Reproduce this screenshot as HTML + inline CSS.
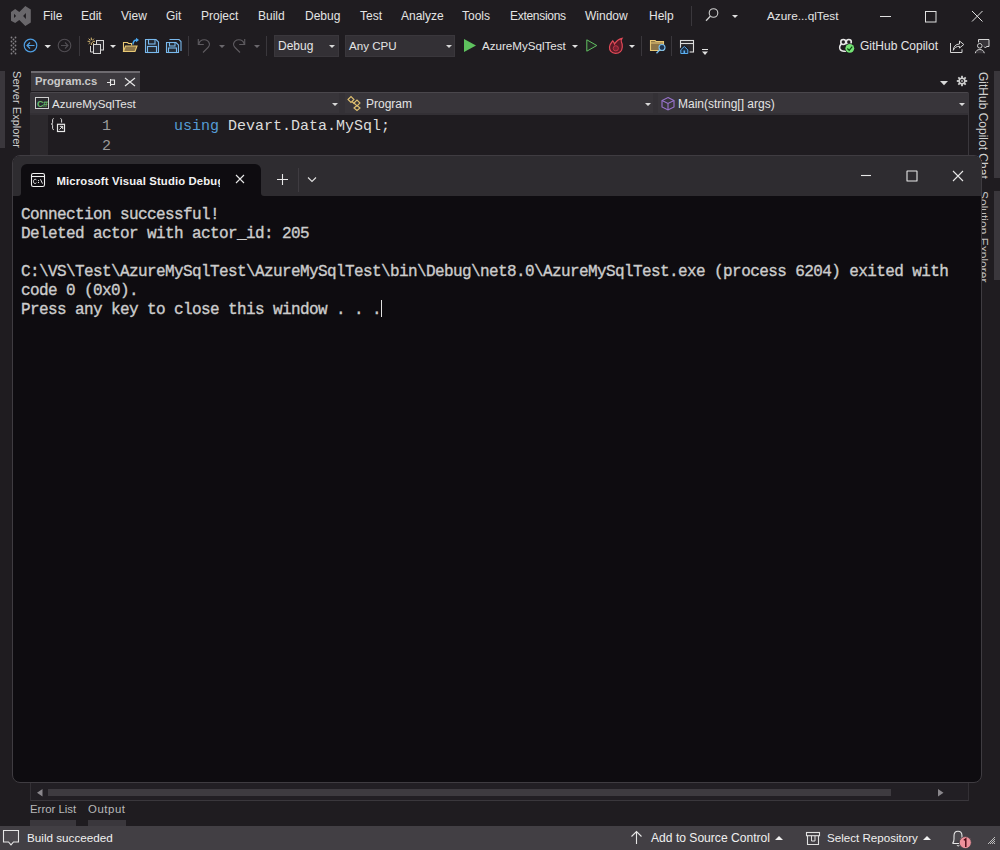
<!DOCTYPE html>
<html><head><meta charset="utf-8">
<style>
*{margin:0;padding:0;box-sizing:border-box}
html,body{width:1000px;height:850px;overflow:hidden;background:#1f1c20;font-family:"Liberation Sans",sans-serif;font-size:12px;color:#dcdcdc}
.a{position:absolute;white-space:nowrap}
svg{position:absolute;overflow:visible}
.menu{top:9px;color:#e4e4e4;font-size:12px}
.sep{position:absolute;width:1px;background:#3e3b40}
.combo{position:absolute;background:#333035;border:1px solid #3a373c}
.arr{position:absolute;width:0;height:0;border-left:3px solid transparent;border-right:3px solid transparent;border-top:3px solid #d0d0d0}
.mono{font-family:"Liberation Mono",monospace}
</style></head><body>

<!-- ===== Title / menu bar ===== -->
<svg style="left:0;top:0" width="40" height="30"><path d="M11 12 L15.2 9 L19.3 12 L25.3 5.9 L30.8 9.6 L30.8 22.4 L25.3 26 L19.3 20.1 L15.2 22.9 L11 20.7 Z M14 13.7 L16.1 16 L14 18 Z M25.9 13.1 L25.9 18.9 L23.1 16 Z" fill="#69676b" fill-rule="evenodd"/></svg>
<div class="a menu" style="left:43px">File</div>
<div class="a menu" style="left:81px">Edit</div>
<div class="a menu" style="left:121px">View</div>
<div class="a menu" style="left:166px">Git</div>
<div class="a menu" style="left:201px">Project</div>
<div class="a menu" style="left:258px">Build</div>
<div class="a menu" style="left:305px">Debug</div>
<div class="a menu" style="left:360px">Test</div>
<div class="a menu" style="left:401px">Analyze</div>
<div class="a menu" style="left:462px">Tools</div>
<div class="a menu" style="left:510px;letter-spacing:-0.3px">Extensions</div>
<div class="a menu" style="left:585px">Window</div>
<div class="a menu" style="left:649px">Help</div>


<!-- ===== Toolbar ===== -->
<svg style="left:0;top:0" width="1000" height="62">
 <g fill="#858287">
  <circle cx="11.5" cy="37.5" r="0.9"/><circle cx="15.5" cy="37.5" r="0.9"/>
  <circle cx="13.5" cy="39.5" r="0.9"/>
  <circle cx="11.5" cy="41.5" r="0.9"/><circle cx="15.5" cy="41.5" r="0.9"/>
  <circle cx="13.5" cy="43.5" r="0.9"/>
  <circle cx="11.5" cy="45.5" r="0.9"/><circle cx="15.5" cy="45.5" r="0.9"/>
  <circle cx="13.5" cy="47.5" r="0.9"/>
  <circle cx="11.5" cy="49.5" r="0.9"/><circle cx="15.5" cy="49.5" r="0.9"/>
  <circle cx="13.5" cy="51.5" r="0.9"/>
  <circle cx="11.5" cy="53.5" r="0.9"/><circle cx="15.5" cy="53.5" r="0.9"/>
 </g>
 <!-- back -->
 <circle cx="30.5" cy="45.5" r="6.3" fill="none" stroke="#4f9fe3" stroke-width="1.2"/>
 <path d="M27 45.5 H34.5 M30 42.5 L27 45.5 L30 48.5" fill="none" stroke="#4f9fe3" stroke-width="1.2"/>
 <path d="M44.5 45 H51 L47.75 48.2 Z" fill="#e0e0e0"/>
 <!-- forward -->
 <circle cx="64.5" cy="45.5" r="6.3" fill="none" stroke="#504d52" stroke-width="1.1"/>
 <path d="M61 45.5 H68 M65 42.5 L68 45.5 L65 48.5" fill="none" stroke="#504d52" stroke-width="1.1"/>
 <rect x="79" y="36" width="1" height="20" fill="#3a373c"/>
 <!-- new project -->
 <g fill="#2e2c31" stroke="#d4d4d4" stroke-width="1">
  <rect x="96.5" y="40.5" width="7" height="9.5"/>
  <rect x="93.5" y="44.5" width="7" height="9"/>
 </g>
 <path d="M90.5 46 V52 H93.5" fill="none" stroke="#d4d4d4" stroke-width="1"/>
 <g stroke="#f0d080" stroke-width="0.9" fill="none">
  <path d="M91.3 37.6 V40 M91.3 42.6 V45 M87.6 41.3 H90 M92.6 41.3 H95 M88.7 38.7 L90.3 40.3 M92.3 42.3 L93.9 43.9 M93.9 38.7 L92.3 40.3 M90.3 42.3 L88.7 43.9"/>
 </g>
 <path d="M110 45 H116 L113 48 Z" fill="#e0e0e0"/>
 <!-- open folder -->
 <path d="M123.5 51.5 V42.5 H127.5 L128.5 43.5 H131.5 V45.5" fill="none" stroke="#e8c874" stroke-width="1.1"/>
 <path d="M123.5 51.5 L125.5 46 H137 L135 51.5 Z" fill="#8a7448" stroke="#e8c874" stroke-width="1.1"/>
 <path d="M133 44.5 C133 41.5 134.5 40 137 40" fill="none" stroke="#4aa8f0" stroke-width="1.4"/>
 <path d="M136 37.8 L139 40 L136 42.2 Z" fill="#4aa8f0"/>
 <!-- save -->
 <path d="M145.5 39.5 H156 L158.5 42 V52.5 H145.5 Z" fill="#252a33" stroke="#79b8ec" stroke-width="1.1"/>
 <rect x="148.5" y="39.5" width="6.5" height="4.5" fill="none" stroke="#79b8ec" stroke-width="1.1"/>
 <rect x="147.5" y="46.5" width="9" height="6" fill="none" stroke="#79b8ec" stroke-width="1.1"/>
 <!-- save all -->
 <path d="M169.5 39.5 H179 L181 41.5 V51" fill="none" stroke="#79b8ec" stroke-width="1.1"/>
 <path d="M166.5 42.5 H176 L178.5 45 V52.5 H166.5 Z" fill="#252a33" stroke="#79b8ec" stroke-width="1.1"/>
 <rect x="169.5" y="42.5" width="5.5" height="3.5" fill="none" stroke="#79b8ec" stroke-width="1.1"/>
 <rect x="168.5" y="48" width="8" height="4.5" fill="none" stroke="#79b8ec" stroke-width="1.1"/>
 <rect x="188" y="36" width="1" height="20" fill="#3a373c"/>
 <!-- undo/redo -->
 <g fill="none" stroke="#5e5b60" stroke-width="1.1">
  <path d="M198.3 39 V44.5 H203.8"/>
  <path d="M198.8 44 A5.5 5.5 0 0 1 209.5 44 Q209.5 46 208 47.5 L203 52.5"/>
  <path d="M244.7 39 V44.5 H239.2"/>
  <path d="M244.2 44 A5.5 5.5 0 0 0 233.5 44 Q233.5 46 235 47.5 L240 52.5"/>
 </g>
 <path d="M219 45 H225 L222 48 Z M254 45 H260 L257 48 Z" fill="#6a676c"/>
 <rect x="266" y="36" width="1" height="20" fill="#3a373c"/>
 <!-- play -->
 <path d="M464 39 L476 45.5 L464 52 Z" fill="#5ec25e"/>
 <path d="M572 45 H578 L575 48 Z" fill="#e0e0e0"/>
 <path d="M586.8 39.8 L596.8 45.5 L586.8 51.2 Z" fill="#232a24" stroke="#62c062" stroke-width="1"/>
 <!-- hot reload -->
 <path d="M615.5 53.3 C611.5 53.3 609.3 50.5 609.5 47 C609.7 44 611.5 42.5 612.8 40.8 C613.8 42 614.3 43 614.5 44 C616 41.5 618.5 39 622 38.3 C621 39.8 620.8 41 621.4 42 C622.3 43.5 622.5 45 622.3 47 C622 50.8 619.5 53.3 615.5 53.3 Z" fill="#5a1a26" stroke="#e24a58" stroke-width="1.2"/>
 <circle cx="615.8" cy="48.3" r="2.6" fill="#7a2232" stroke="#c83848" stroke-width="0.9"/>
 <path d="M629 45 H635 L632 48 Z" fill="#e0e0e0"/>
 <rect x="641" y="36" width="1" height="20" fill="#3a373c"/>
 <!-- folder search -->
 <path d="M650.5 50.5 V40.5 H655 L656 41.5 H663.5 V50.5 Z" fill="#8c7548" stroke="#e8c874" stroke-width="1.1"/>
 <path d="M650.5 43 H663.5" stroke="#e8c874" stroke-width="1"/>
 <circle cx="662" cy="47.5" r="3" fill="#1d3552" stroke="#7cc0f0" stroke-width="1.1"/>
 <path d="M659.8 49.8 L656.5 53.2" stroke="#7cc0f0" stroke-width="1.3"/>
 <rect x="671" y="36" width="1" height="20" fill="#3a373c"/>
 <!-- window home -->
 <rect x="680.5" y="40.5" width="13" height="11.5" fill="#2a282c" stroke="#dcdcdc" stroke-width="1.1"/>
 <path d="M680.5 43.5 H693.5" stroke="#dcdcdc" stroke-width="1.1"/>
 <path d="M680.5 49.8 L684.3 46.3 L688.1 49.8 V53.8 H680.5 Z" fill="#1f1c20" stroke="#1f1c20" stroke-width="3"/>
 <path d="M680.8 49.8 L684.3 46.5 L687.8 49.8 V53.5 H680.8 Z" fill="#1d3047" stroke="#5aaef0" stroke-width="1"/>
 <rect x="683.5" y="50.5" width="1.6" height="2.5" fill="#5aaef0"/>
 <path d="M702 49.5 H708" stroke="#e0e0e0" stroke-width="1"/>
 <path d="M702 51.5 H708 L705 55 Z" fill="#e0e0e0"/>
 <!-- title bar right -->
 <rect x="691" y="6" width="1" height="20" fill="#3a373c"/>
 <circle cx="713.5" cy="13" r="4.3" fill="none" stroke="#cfcfcf" stroke-width="1.1"/>
 <path d="M710.3 16.3 L706 20.7" stroke="#cfcfcf" stroke-width="1.3"/>
 <path d="M732 15 H738 L735 18 Z" fill="#e0e0e0"/>
 <path d="M880 16.5 H891" stroke="#e0e0e0" stroke-width="1"/>
 <rect x="925.5" y="11.5" width="10.5" height="10.5" fill="none" stroke="#e0e0e0" stroke-width="1"/>
 <path d="M972 11 L982.5 21.5 M982.5 11 L972 21.5" stroke="#e0e0e0" stroke-width="1"/>
 <!-- copilot -->
 <g fill="none" stroke="#e8e8e8" stroke-width="1.6">
  <circle cx="843.3" cy="42" r="2.5"/>
  <circle cx="848.8" cy="42" r="2.5"/>
  <path d="M841.2 44 C839.8 45.5 839.5 47.5 840 49 C840.6 50.6 842 51.2 844 51.2 H846"/>
 </g>
 <circle cx="849.8" cy="48.3" r="5" fill="#1f1c20"/>
 <circle cx="849.8" cy="48.3" r="4.4" fill="#74e274"/>
 <path d="M847.3 48.6 L849.2 50.3 L852.2 46.6" fill="none" stroke="#0b4d12" stroke-width="1.3"/>
 <!-- share -->
 <g fill="none" stroke="#d6d6d6" stroke-width="1">
  <path d="M950.5 43 V52.5 H962 V49.3"/>
  <path d="M953.3 50.3 C953.5 46.5 955.5 44.2 959.5 44 V41 L963.8 44.5 L959.5 48 V46.3 C956.5 46.3 954.5 47.5 953.3 50.3 Z" stroke-linejoin="round"/>
 </g>
 <!-- feedback -->
 <path d="M978.5 42.5 V39.5 H989 V46.5 H986.5 L985.5 48 L984 46.5" fill="#38353a" stroke="#d6d6d6" stroke-width="1"/>
 <circle cx="979.8" cy="45.8" r="3.3" fill="#1f1c20"/>
 <circle cx="979.8" cy="45.8" r="2.3" fill="#1f1c20" stroke="#d6d6d6" stroke-width="1"/>
 <path d="M975.3 53.2 C975.8 50.7 977.5 49.5 979.8 49.5 C982 49.5 983.8 50.7 984.3 53.2" fill="#38353a" stroke="#d6d6d6" stroke-width="1"/>
</svg>
<div class="combo" style="left:274px;top:35px;width:65px;height:22px"></div>
<div class="a" style="left:278px;top:39px;color:#e4e4e4">Debug</div>
<svg style="left:0;top:0" width="1" height="1"><path d="M329 45 H335 L332 48 Z" fill="#d8d8d8"/></svg>
<div class="combo" style="left:345px;top:35px;width:110px;height:22px"></div>
<div class="a" style="left:349px;top:39px;color:#e4e4e4;font-size:11.6px">Any CPU</div>
<svg style="left:0;top:0" width="1" height="1"><path d="M446 45 H452 L449 48 Z" fill="#d8d8d8"/></svg>
<div class="a" style="left:482px;top:39px;color:#e4e4e4;font-size:11.6px">AzureMySqlTest</div>
<div class="a" style="left:767px;top:9px;color:#e4e4e4;font-size:11.8px">Azure...qlTest</div>
<div class="a" style="left:860px;top:39px;color:#e4e4e4">GitHub Copilot</div>


<!-- ===== Side strips ===== -->
<div class="a" style="left:0;top:71px;width:5px;height:77px;background:#3a373c"></div>
<div class="a" style="left:22.5px;top:71px;transform-origin:0 0;transform:rotate(90deg);font-size:11.1px;color:#cfcfcf;line-height:12px">Server Explorer</div>
<div class="a" style="left:994px;top:71px;width:6px;height:107px;background:#3a373c"></div>
<div class="a" style="left:994px;top:191px;width:6px;height:89px;background:#3a373c"></div>
<div class="a" style="left:989px;top:72px;transform-origin:0 0;transform:rotate(90deg);font-size:12px;color:#cfcfcf;line-height:12px">GitHub Copilot Chat</div>
<div class="a" style="left:989px;top:191px;transform-origin:0 0;transform:rotate(90deg);font-size:12px;color:#bdbdbd;line-height:12px">Solution Explorer</div>

<!-- ===== Document tab ===== -->
<div class="a" style="left:31px;top:71px;width:109px;height:20px;background:#3d3a3f;border-top:2px solid #6e6b70"></div>
<div class="a" style="left:35px;top:75px;font-weight:bold;color:#c8c8c8;font-size:11.3px">Program.cs</div>
<svg style="left:0;top:0" width="1" height="1">
 <path d="M107 82.5 H110 M110.5 79 V86 M110.5 80 H114.5 V84.5 H110.5" fill="none" stroke="#e6e6e6" stroke-width="1.1"/>
 <path d="M125 78 L135 86 M135 78 L125 86" stroke="#e6e6e6" stroke-width="1.2"/>
 <path d="M940 81 H948 L944 85.2 Z" fill="#d8d8d8"/>
 <g transform="translate(962 81)" fill="#d0d0d0">
  <circle r="3.6"/>
  <rect x="-0.9" y="-5.2" width="1.8" height="10.4"/>
  <rect x="-5.2" y="-0.9" width="10.4" height="1.8"/>
  <rect x="-0.9" y="-5.2" width="1.8" height="10.4" transform="rotate(45)"/>
  <rect x="-0.9" y="-5.2" width="1.8" height="10.4" transform="rotate(-45)"/>
  <circle r="2.1" fill="#1f1c20"/>
  <circle r="0.9" fill="#bdbdbd"/>
 </g>
</svg>

<!-- ===== Nav bar ===== -->
<div class="a" style="left:30px;top:92px;width:939px;height:23px;background:#38353a;border-top:1px solid #4a474c;border-radius:2px 2px 0 0"></div>
<div class="a" style="left:339px;top:93px;width:6px;height:20px;background:#343136"></div>
<div class="a" style="left:653px;top:93px;width:5px;height:20px;background:#343136"></div>
<div class="a" style="left:30px;top:113px;width:939px;height:2px;background:#333035"></div>
<svg style="left:0;top:0" width="1" height="1">
 <rect x="35.5" y="97.5" width="13" height="11" fill="#2b2a2e" stroke="#cfcfcf" stroke-width="1"/>
 <path d="M332 103 H338 L335 106 Z M645 103 H651 L648 106 Z M959 103 H965 L962 106 Z" fill="#d8d8d8"/>
 <g fill="none" stroke="#e0c070" stroke-width="1.1">
  <path d="M348 99.5 L351 96.5 L354 99.5 L351 102.5 Z"/>
  <path d="M354 103 L357 100 L360 103 L357 106 Z"/>
  <path d="M354 108 L357 105.5 L360 108 L357 110.5 Z"/>
  <path d="M352 101.5 L354.5 104 M356 106 V106"/>
 </g>
 <g fill="none" stroke="#9b74d0" stroke-width="1.1">
  <path d="M668 97.5 L674 100.5 V107 L668 110 L662 107 V100.5 Z"/>
  <path d="M662 100.5 L668 103.5 L674 100.5 M668 103.5 V110"/>
 </g>
</svg>
<div class="a" style="left:37px;top:99px;font-size:9px;color:#6cc070;font-weight:bold;letter-spacing:-0.5px">C#</div>
<div class="a" style="left:52px;top:97px;color:#e4e4e4;font-size:11.6px">AzureMySqlTest</div>
<div class="a" style="left:366px;top:97px;color:#e4e4e4">Program</div>
<div class="a" style="left:678px;top:97px;color:#e4e4e4">Main(string[] args)</div>

<!-- ===== Code area ===== -->
<div class="a" style="left:30px;top:115px;width:939px;height:41px;background:#1f1c20"></div>
<div class="a" style="left:30px;top:115px;width:18px;height:41px;background:#2c292d"></div>
<div class="a" style="left:968px;top:93px;width:1px;height:63px;background:#3a373c"></div>
<svg style="left:0;top:0" width="1" height="1">
 <path d="M53.8 118.5 C53 118.5 52.6 119 52.6 120 V122.8 C52.6 123.5 52.2 124 51.3 124 C52.2 124 52.6 124.5 52.6 125.2 V128.3 C52.6 129.2 53 129.7 53.8 129.7" fill="none" stroke="#dcdcdc" stroke-width="1"/>
 <path d="M60.4 118.5 C61.2 118.5 61.6 119 61.6 120 V122.6" fill="none" stroke="#dcdcdc" stroke-width="1"/>
 <rect x="57.5" y="124.3" width="7" height="7.2" fill="#1f1c20" stroke="#e8e8e8" stroke-width="1.2"/>
 <path d="M59.4 129.6 L62.6 126.4 M59.8 126.3 H62.7 V129.1" fill="none" stroke="#e8e8e8" stroke-width="1"/>
</svg>
<div class="a mono" style="left:102px;top:117px;font-size:15px;line-height:20px;color:#9a9a9a">1</div>
<div class="a mono" style="left:102px;top:137px;font-size:15px;line-height:20px;color:#9a9a9a">2</div>
<div class="a mono" style="left:174px;top:117px;font-size:15px;line-height:20px;color:#dcdcdc"><span style="color:#569cd6">using</span> Devart.Data.MySql;</div>

<!-- ===== Console window ===== -->
<div class="a" style="left:12px;top:155px;width:970px;height:628px;background:#0e0c10;border-radius:8px;border:1px solid #3f3c41;overflow:hidden">
  <div class="a" style="left:0;top:0;width:968px;height:16px;background:#2e2c30"></div>
  <div class="a" style="left:0;top:0;width:8px;height:40px;background:#2e2c30;border-bottom-right-radius:3px"></div>
  <div class="a" style="left:248px;top:0;width:720px;height:40px;background:#2e2c30;border-bottom-left-radius:3px"></div>
  <div class="a" style="left:8px;top:8px;width:240px;height:33px;background:#0e0c10;border-radius:6px 6px 0 0"></div>
</div>
<svg style="left:0;top:0" width="1" height="1">
 <rect x="31.5" y="173.5" width="13" height="13" rx="1.8" fill="none" stroke="#f0f0f0" stroke-width="1.1"/>
 <path d="M31.5 176.5 H44.5" stroke="#f0f0f0" stroke-width="1.1"/>
 <path d="M236 175 L244 183 M244 175 L236 183" stroke="#e8e8e8" stroke-width="1.1"/>
 <path d="M282.5 174 V185 M277 179.5 H288" stroke="#e8e8e8" stroke-width="1.1"/>
 <rect x="298" y="168" width="1" height="24" fill="#3f3c41"/>
 <path d="M308 177.5 L312 181.5 L316 177.5" fill="none" stroke="#e0e0e0" stroke-width="1.1"/>
 <path d="M861 175.5 H871" stroke="#e8e8e8" stroke-width="1.1"/>
 <rect x="907" y="171" width="10" height="10" rx="0.3" fill="none" stroke="#e8e8e8" stroke-width="1.1"/>
 <path d="M953 171 L963 181 M963 171 L953 181" stroke="#e8e8e8" stroke-width="1.1"/>
</svg>
<svg style="left:0;top:0" width="1" height="1"><path d="M36.4 179.9 C35.9 179.4 35.5 179.3 35 179.3 C34 179.3 33.5 180.3 33.5 181.4 C33.5 182.6 34 183.5 35 183.5 C35.5 183.5 35.9 183.3 36.4 182.8" fill="none" stroke="#f0f0f0" stroke-width="0.95"/><circle cx="38.5" cy="180.5" r="0.6" fill="#f0f0f0"/><circle cx="38.5" cy="182.4" r="0.6" fill="#f0f0f0"/><path d="M40.5 179.3 L42.5 183.6" stroke="#f0f0f0" stroke-width="0.95"/></svg>
<div class="a" style="left:56.5px;top:175px;width:163.5px;overflow:hidden;font-weight:bold;color:#f2f2f2;font-size:11.3px;letter-spacing:0.15px">Microsoft Visual Studio Debug Console</div>
<div class="a mono" style="left:21px;top:206px;font-size:16px;letter-spacing:-0.6px;line-height:19px;color:#cccccc;-webkit-text-stroke:0.35px #cccccc;white-space:pre">Connection successful!
Deleted actor with actor_id: 205

C:\VS\Test\AzureMySqlTest\AzureMySqlTest\bin\Debug\net8.0\AzureMySqlTest.exe (process 6204) exited with
code 0 (0x0).
Press any key to close this window . . .</div>
<div class="a" style="left:381px;top:300px;width:1px;height:17px;background:#e0e0e0"></div>

<!-- ===== Scrollbar / bottom tabs ===== -->
<div class="a" style="left:30px;top:783px;width:939px;height:18px;background:#221f24;border-bottom:1px solid #3a373c;border-left:1px solid #333035;border-right:1px solid #333035"></div>
<div class="a" style="left:48px;top:789px;width:843px;height:7px;background:#3e3b40"></div>
<svg style="left:0;top:0" width="1" height="1">
 <path d="M42.5 789 V796.5 L37 792.75 Z M938 789 V796.5 L943.5 792.75 Z" fill="#8a878c"/>
</svg>
<div class="a" style="left:30px;top:802.5px;color:#b8b8b8;font-size:11.4px">Error List</div>
<div class="a" style="left:88px;top:802.5px;color:#b8b8b8;font-size:11.4px;letter-spacing:0.55px">Output</div>
<div class="a" style="left:30px;top:820px;width:46px;height:6px;background:#3a373c"></div>
<div class="a" style="left:88px;top:820px;width:38px;height:6px;background:#3a373c"></div>

<!-- ===== Status bar ===== -->
<div class="a" style="left:0;top:826px;width:1000px;height:24px;background:#423f44"></div>
<svg style="left:0;top:0" width="1" height="1">
 <path d="M3.5 830.5 H18.5 V842 H13.5 L11 844.8 L8.5 842 H3.5 Z" fill="#4b484d" stroke="#e6e6e6" stroke-width="1.1"/>
 <path d="M636.5 831.5 V844 M631.5 836.5 L636.5 831.5 L641.5 836.5" fill="none" stroke="#e6e6e6" stroke-width="1.1"/>
 <path d="M775 840 L779 836 L783 840 Z M923 840 L927 836 L931 840 Z" fill="#f0f0f0"/>
 <rect x="806.5" y="832.5" width="13" height="3.2" fill="none" stroke="#e0e0e0" stroke-width="1.1"/>
 <path d="M807.5 835.7 V844.5 H818.5 V835.7" fill="none" stroke="#e0e0e0" stroke-width="1.1"/>
 <path d="M811.5 835.7 V841 H815 V835.7" fill="none" stroke="#e0e0e0" stroke-width="1"/>
 <path d="M952.5 843.5 H961 M952.5 843.5 C953.8 842.3 954 841 954 839 V836 C954 833 955.8 831.3 958 831.3 C960.2 831.3 962 833 962 836 V839" fill="#4b484d" stroke="#e6e6e6" stroke-width="1.1"/>
 <path d="M957 845 A1.3 1.3 0 0 0 959.5 845" fill="none" stroke="#e6e6e6" stroke-width="1"/>
 <circle cx="965.3" cy="842.6" r="6" fill="#f0929c" stroke="#423f44" stroke-width="0.8"/>
 <path d="M963.8 840.3 L965.8 838.8 V847" fill="none" stroke="#4a0612" stroke-width="1.4"/>
 <g fill="#bdbdbd">
  <rect x="994" y="837" width="1" height="1"/>
  <rect x="992" y="839" width="1" height="1"/><rect x="994" y="839" width="1" height="1"/>
  <rect x="990" y="841" width="1" height="1"/><rect x="992" y="841" width="1" height="1"/><rect x="994" y="841" width="1" height="1"/>
  <rect x="988" y="843" width="1" height="1"/><rect x="990" y="843" width="1" height="1"/><rect x="992" y="843" width="1" height="1"/><rect x="994" y="843" width="1" height="1"/>
  <rect x="993" y="838" width="1" height="1"/><rect x="991" y="840" width="1" height="1"/><rect x="993" y="840" width="1" height="1"/>
  <rect x="989" y="842" width="1" height="1"/><rect x="991" y="842" width="1" height="1"/><rect x="993" y="842" width="1" height="1"/>
 </g>
</svg>
<div class="a" style="left:27px;top:831px;color:#f0f0f0;font-size:11.7px">Build succeeded</div>
<div class="a" style="left:651px;top:831px;color:#f0f0f0;font-size:12.1px">Add to Source Control</div>
<div class="a" style="left:827px;top:831px;color:#f0f0f0;font-size:11.6px">Select Repository</div>

</body></html>
